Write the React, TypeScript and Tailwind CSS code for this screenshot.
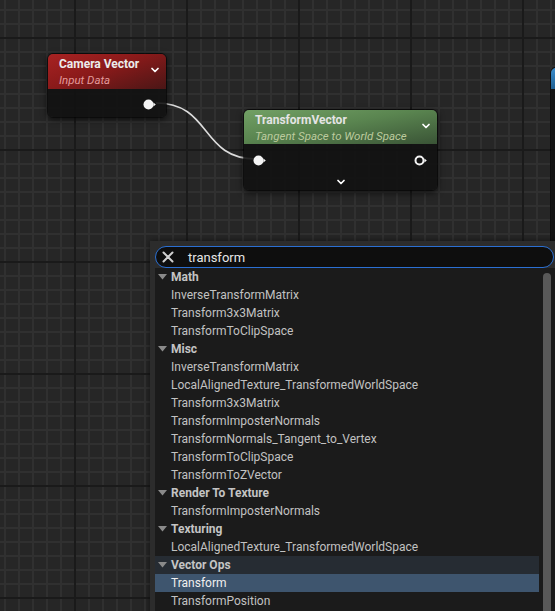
import React from "react";
import { ChevronDown } from "lucide-react";

type Group = { name: string; items: string[] };

const groups: Group[] = [
  { name: "Math", items: ["InverseTransformMatrix", "Transform3x3Matrix", "TransformToClipSpace"] },
  {
    name: "Misc",
    items: [
      "InverseTransformMatrix",
      "LocalAlignedTexture_TransformedWorldSpace",
      "Transform3x3Matrix",
      "TransformImposterNormals",
      "TransformNormals_Tangent_to_Vertex",
      "TransformToClipSpace",
      "TransformToZVector",
    ],
  },
  { name: "Render To Texture", items: ["TransformImposterNormals"] },
  { name: "Texturing", items: ["LocalAlignedTexture_TransformedWorldSpace"] },
  { name: "Vector Ops", items: ["Transform", "TransformPosition"] },
];

const Pin = ({ hollow }: { hollow?: boolean }) => (
  <svg width="14" height="11" viewBox="0 0 14 11">
    {hollow ? (
      <circle cx="5.5" cy="5.5" r="4" fill="none" stroke="#f2f2f2" strokeWidth="2" />
    ) : (
      <circle cx="5.5" cy="5.5" r="5" fill="#f4f4f4" />
    )}
    <path d="M10.4 3.6 L12.8 5.5 L10.4 7.4 Z" fill="#f4f4f4" />
  </svg>
);

const App = () => {
  return (
    <div
      className="relative w-[555px] h-[611px] overflow-hidden bg-[#262626] bg-[linear-gradient(to_right,#1a1a1a_2px,transparent_2px),linear-gradient(to_bottom,#1a1a1a_2px,transparent_2px),linear-gradient(to_right,#303030_2px,transparent_2px),linear-gradient(to_bottom,#303030_2px,transparent_2px)] bg-size-[112px_112px,112px_112px,14px_14px,14px_14px] bg-position-[74px_0,0_37px,4px_0,0_9px]"
      style={{ fontFamily: "Roboto, 'Noto Sans', sans-serif" }}>
      {/* wire between the two nodes */}
      <svg className="absolute inset-0 pointer-events-none" width="555" height="611">
        <path d="M156 103 C 212 103, 200 159, 256 159" fill="none" stroke="#dcdcdc" strokeWidth="1.6" />
      </svg>

      {/* Camera Vector node */}
      <div className="absolute left-[47px] top-[53px] w-[120px] h-[65px] rounded-[6px] border border-black/70 overflow-hidden shadow-[0_2px_6px_rgba(0,0,0,0.6)]">
        <div className="relative h-[35px] px-[11px] pt-[2px] bg-[linear-gradient(160deg,#a82222_0%,#8a1a1a_45%,#4a1616_100%)]">
          <div className="text-[12px] font-bold leading-[16px] text-[#ececec]">Camera Vector</div>
          <div className="text-[11.5px] italic leading-[16px] text-[#e39a9a]">Input Data</div>
          <ChevronDown className="absolute right-[5px] top-[10px] text-white" size={12} strokeWidth={3.5} />
        </div>
        <div className="h-[30px] flex items-center justify-end pr-[9px] bg-[#121212]/90">
          <Pin />
        </div>
      </div>

      {/* TransformVector node */}
      <div className="absolute left-[243px] top-[109px] w-[195px] h-[82px] rounded-[6px] border border-black/70 overflow-hidden shadow-[0_2px_6px_rgba(0,0,0,0.6)]">
        <div className="relative h-[34px] px-[11px] pt-[2px] bg-[linear-gradient(170deg,#72a065_0%,#5a8550_45%,#3a5436_100%)]">
          <div className="text-[12px] font-bold leading-[16px] text-[#e4e4e4]">TransformVector</div>
          <div className="text-[11.5px] italic leading-[16px] text-[#bccb9e]">Tangent Space to World Space</div>
          <ChevronDown className="absolute right-[5px] top-[10px] text-white" size={12} strokeWidth={3.5} />
        </div>
        <div className="bg-[#121212]/90 h-[48px]">
          <div className="h-[32px] flex items-center justify-between pl-[9px] pr-[9px]">
            <Pin />
            <Pin hollow />
          </div>
          <div className="flex justify-center">
            <ChevronDown className="text-white" size={12} strokeWidth={3.5} />
          </div>
        </div>
      </div>

      {/* node cut off on the right */}
      <div className="absolute left-[550px] top-[67px] w-[40px] h-[190px] rounded-[6px] border border-black/70 overflow-hidden">
        <div className="h-[21px] bg-[linear-gradient(180deg,#3a8ccc,#1f5f90)]" />
        <div className="h-full bg-[#121212]/90" />
      </div>

      {/* search menu */}
      <div className="absolute left-[150px] top-[241px] w-[420px] h-[380px] bg-[#2c2c2c] pl-[5px] pt-[5px] shadow-[0_0_6px_rgba(0,0,0,0.5)]">
        <div className="w-[399px] h-[22px] rounded-full border-[1.5px] border-[#2b6fd2] bg-[#0e0e0e] flex items-center pl-[6px]">
          <svg width="12" height="12" viewBox="0 0 12 12">
            <path d="M1.5 1.5 L10.5 10.5 M10.5 1.5 L1.5 10.5" stroke="#d0d0d0" strokeWidth="2" strokeLinecap="round" />
          </svg>
          <span className="ml-[14px] text-[13px] text-[#e6e6e6] leading-none">transform</span>
        </div>
        <div className="relative w-[415px] h-[360px] bg-[#1b1b1b]">
          <div className="w-[384px]">
            {groups.map((g) => (
              <div key={g.name}>
                <div
                  className={`h-[18px] flex items-center text-[12px] font-bold text-[#c4c4c4] ${
                    g.name === "Vector Ops" ? "bg-[#262c33]" : ""
                  }`}>
                  <svg className="ml-[3px] mr-[4px]" width="9" height="6" viewBox="0 0 9 6">
                    <path d="M0 0 L9 0 L4.5 5.5 Z" fill="#8a8a8a" />
                  </svg>
                  {g.name}
                </div>
                {g.items.map((it, i) => {
                  const selected = g.name === "Vector Ops" && i === 0;
                  return (
                    <div
                      key={it + i}
                      className={`h-[18px] flex items-center pl-[16px] text-[12px] ${
                        selected ? "bg-[#3e556e] text-[#f0f0f0]" : "text-[#c2c2c2]"
                      }`}>
                      {it}
                    </div>
                  );
                })}
              </div>
            ))}
          </div>
          <div className="absolute left-[388px] top-[5px] w-[8px] h-[400px] rounded-full bg-[#595959]" />
        </div>
      </div>
    </div>
  );
};

export default App;
